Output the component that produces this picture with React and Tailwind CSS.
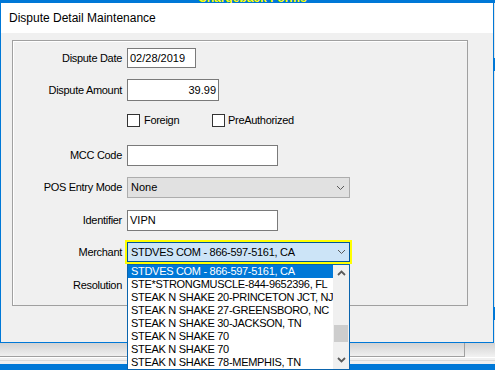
import React from "react";

/* ---------------- Chevrones ---------------- */
function Chevron({ up = false, bold = false }) {
  return (
    <svg width="9" height="6" viewBox="0 0 9 6" className="shrink-0">
      <polyline
        points={up ? "1,5 4.5,1.5 8,5" : "1,1 4.5,4.5 8,1"}
        fill="none"
        stroke="#5a5a5a"
        strokeWidth={bold ? 1.8 : 1}
      />
    </svg>
  );
}

/* ---------------- Fila del formulario ---------------- */
function Row({ label, className, children }) {
  return (
    <div className={`flex items-center ${className}`}>
      <div className="w-[109px] mr-[5px] text-right text-[11px] tracking-[-0.3px] text-black whitespace-nowrap">
        {label}
      </div>
      {children}
    </div>
  );
}

const merchants = [
  "STDVES COM - 866-597-5161, CA",
  "STE*STRONGMUSCLE-844-9652396, FL",
  "STEAK N SHAKE 20-PRINCETON JCT, NJ",
  "STEAK N SHAKE 27-GREENSBORO, NC",
  "STEAK N SHAKE 30-JACKSON, TN",
  "STEAK N SHAKE 70",
  "STEAK N SHAKE 70",
  "STEAK N SHAKE 78-MEMPHIS, TN",
];

export default function App() {
  return (
    <div className="w-[495px] h-[370px] overflow-hidden bg-[#f0f0f0] flex flex-col font-['Liberation_Sans',Arial,sans-serif]">
      {/* ---- Ventana de fondo (franja superior) ---- */}
      <div className="h-[3px] bg-[#0078d7] overflow-hidden relative shrink-0">
        <span className="absolute left-[198px] top-[-9px] text-[12px] leading-[14px] font-bold text-[#ffff00] whitespace-nowrap">
          Chargeback Forms
        </span>
      </div>

      <div className="flex h-[340px] shrink-0">
        {/* ---- Dialogo ---- */}
        <div className="w-[494px] border-x border-b border-[#0078d7] bg-[#f0f0f0] flex flex-col">
          <div className="h-[30px] bg-white flex items-center pl-[8px] text-[12px] text-black shrink-0">
            Dispute Detail Maintenance
          </div>

          <div className="pl-[11px] pt-[7px]">
            <div className="w-[456px] h-[266px] border border-[#a0a0a0] shadow-[inset_1px_1px_0_#ffffff] flex flex-col">
              <Row label="Dispute Date" className="mt-[7px] h-[20px]">
                <div className="w-[69px] h-[20px] border border-[#7a7a7a] bg-white pl-[2px] text-[11px] leading-[18px] text-black">
                  02/28/2019
                </div>
              </Row>

              <Row label="Dispute Amount" className="mt-[11px] h-[22px]">
                <div className="w-[92px] h-[22px] border border-[#7a7a7a] bg-white pr-[2px] text-right text-[11px] leading-[20px] text-black">
                  39.99
                </div>
              </Row>

              <Row label="" className="mt-[13px] h-[13px]">
                <div className="flex items-center w-[85px]">
                  <div className="w-[13px] h-[13px] border border-[#333333] bg-white" />
                  <span className="ml-[4px] text-[11px] tracking-[-0.3px] text-black">Foreign</span>
                </div>
                <div className="flex items-center">
                  <div className="w-[13px] h-[13px] border border-[#333333] bg-white" />
                  <span className="ml-[3px] text-[11px] tracking-[-0.3px] text-black">PreAuthorized</span>
                </div>
              </Row>

              <Row label="MCC Code" className="mt-[18px] h-[21px]">
                <div className="w-[151px] h-[21px] border border-[#7a7a7a] bg-white" />
              </Row>

              <Row label="POS Entry Mode" className="mt-[11px] h-[21px]">
                <div className="w-[223px] h-[21px] border border-[#adadad] bg-[#e1e1e1] flex items-center justify-between pl-[3px] pr-[4px] text-[11px] text-black">
                  <span>None</span>
                  <Chevron />
                </div>
              </Row>

              <Row label="Identifier" className="mt-[12px] h-[21px]">
                <div className="w-[151px] h-[21px] border border-[#7a7a7a] bg-white pl-[2px] text-[11px] leading-[19px] text-black">
                  VIPN
                </div>
              </Row>

              <Row label="Merchant" className="mt-[11px] h-[20px]">
                <div className="relative w-[223px] h-[20px]">
                  <div className="w-full h-full border border-[#005499] bg-[#cce4f7] ring-2 ring-[#ffff00] flex items-center justify-between pl-[3px] pr-[3px] text-[11px] tracking-[-0.3px] text-black">
                    <span className="whitespace-nowrap">STDVES COM - 866-597-5161, CA</span>
                    <Chevron />
                  </div>

                  {/* ---- Lista desplegada ---- */}
                  <div className="absolute left-0 top-[22px] w-[223px] h-[106px] border border-[#0a64ad] bg-white flex z-10">
                    <div className="w-[205px] flex flex-col">
                      {merchants.map((m, i) => (
                        <div
                          key={i}
                          className={
                            i === 0
                              ? "h-[13px] leading-[13px] pl-[3px] text-[11px] tracking-[-0.3px] whitespace-nowrap overflow-hidden bg-[#0078d7] text-white"
                              : "h-[13px] leading-[13px] pl-[3px] text-[11px] tracking-[-0.3px] whitespace-nowrap overflow-hidden text-black"
                          }
                        >
                          {m}
                        </div>
                      ))}
                    </div>
                    <div className="w-[16px] bg-[#f0f0f0] flex flex-col">
                      <div className="h-[16px] flex items-center justify-center">
                        <Chevron up bold />
                      </div>
                      <div className="h-[44px]" />
                      <div className="h-[17px] mx-[1px] bg-[#cdcdcd]" />
                      <div className="h-[10px]" />
                      <div className="h-[16px] flex items-center justify-center">
                        <Chevron bold />
                      </div>
                    </div>
                  </div>
                </div>
              </Row>

              <Row label="Resolution" className="mt-[13px] h-[21px]" />
            </div>
          </div>
        </div>

        {/* ---- Borde de la ventana de fondo ---- */}
        <div className="w-px flex flex-col bg-[#e6e6e6]">
          <div className="h-[55px]" />
          <div className="h-[13px] bg-[#0078d7]" />
          <div className="h-[236px]" />
          <div className="h-[13px] bg-[#0078d7]" />
        </div>
      </div>

      {/* ---- Sombra y ventana de fondo ---- */}
      <div className="h-[13px] bg-linear-to-b from-[#d2d2d2] to-[#f0f0f0] shrink-0">
        <div className="w-[465px] h-full border-r border-[#a0a0a0]" />
      </div>
      <div className="h-px w-[465px] bg-[#a0a0a0] shrink-0" />
      <div className="h-px bg-white shrink-0" />
      <div className="h-[2px] bg-[#f0f0f0] shrink-0" />
      <div className="h-px bg-[#dadada] shrink-0" />
      <div className="h-[3px] bg-[#f0f0f0] shrink-0" />
      <div className="flex-1 bg-[#0078d7]" />
    </div>
  );
}
